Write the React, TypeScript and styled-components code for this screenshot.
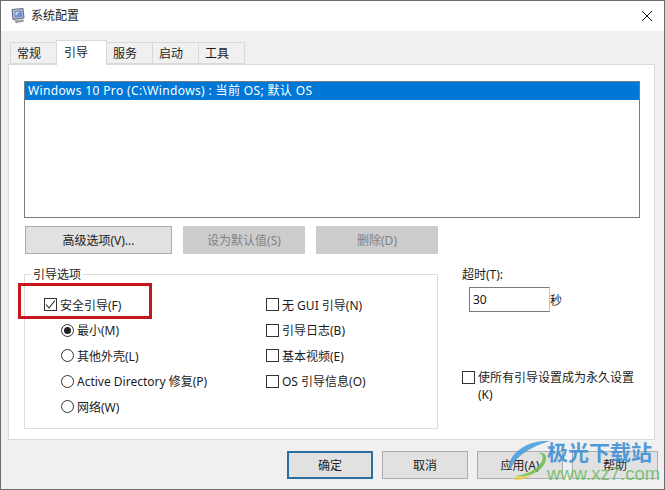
import styled, { createGlobalStyle } from "styled-components";

const GlobalStyle = createGlobalStyle`
  html, body {
    margin: 0;
    padding: 0;
    background: #f0f0f0;
  }
  body {
    font-family: "Noto Sans", "Noto Sans CJK SC", sans-serif;
    font-size: 12px;
    color: #1c1c1c;
  }
`;

const bootOptions = [
  { label: "最小(M)", checked: true },
  { label: "其他外壳(L)", checked: false },
  { label: "Active Directory 修复(P)", checked: false },
  { label: "网络(W)", checked: false },
];

const extraOptions = ["无 GUI 引导(N)", "引导日志(B)", "基本视频(E)", "OS 引导信息(O)"];

const tabs = ["常规", "引导", "服务", "启动", "工具"];

function AppIcon() {
  return (
    <svg width="16" height="16" viewBox="0 0 16 16">
      <path d="M2 1.5 L13 0.5 L14 10 L3 11.5 Z" fill="#b9c2d2" stroke="#5c6472" strokeWidth="1" />
      <path d="M4 3 L11.8 2.4 L12.4 8.8 L4.6 9.8 Z" fill="#6f8fd0" />
      <path d="M5.2 4.2 L9.6 3.8 L5.8 8 Z" fill="#c4d4f2" />
      <path d="M4 12.5 L13 11.5 L14.5 13.5 L6 15.2 Z" fill="#9a9ea6" />
    </svg>
  );
}

function CloseIcon() {
  return (
    <svg width="10" height="10" viewBox="0 0 10 10">
      <path d="M0 0 L10 10 M10 0 L0 10" stroke="#111" strokeWidth="1" fill="none" />
    </svg>
  );
}

function CheckMark() {
  return (
    <svg width="11" height="11" viewBox="0 0 11 11">
      <path d="M1 5.5 L4 9 L10 1.5" stroke="#222" strokeWidth="1.1" fill="none" />
    </svg>
  );
}

function WatermarkLogo() {
  return (
    <svg width="44" height="42" viewBox="0 0 44 42">
      <path d="M42 2 C24 1 6 9 1 25 C1 28 2 30 3 31 C6 18 22 8 42 2 Z" fill="#4a9fdc" />
      <path d="M29 15 C36 13 36 20 32 25 C27 32 17 36 7 37 C18 39 32 34 37 24 C40 17 37 12 29 15 Z" fill="#72c04f" />
      <path d="M8 37 C14 38 20 37 25 35 C20 39 14 41 6 41 Z" fill="#e9cf55" />
    </svg>
  );
}

export default function App() {
  return (
    <Window>
      <GlobalStyle />
      <TitleBar>
        <TitleIcon>
          <AppIcon />
        </TitleIcon>
        <TitleText>系统配置</TitleText>
        <CloseBox>
          <CloseIcon />
        </CloseBox>
      </TitleBar>

      <TabStrip>
        {tabs.map((t) => (
          <Tab key={t} $active={t === "引导"}>
            {t}
          </Tab>
        ))}
      </TabStrip>

      <Panel>
        <ListBox>
          <ListRow>Windows 10 Pro (C:\Windows) : 当前 OS; 默认 OS</ListRow>
        </ListBox>

        <ActionRow>
          <ActionButton $width={147}>高级选项(V)...</ActionButton>
          <ActionButton $width={122} $disabled>
            设为默认值(S)
          </ActionButton>
          <ActionButton $width={122} $disabled>
            删除(D)
          </ActionButton>
        </ActionRow>

        <LowerArea>
          <GroupBox>
            <GroupLegend>引导选项</GroupLegend>
            <GroupColumns>
              <OptionColumn>
                <OptionRow>
                  <CheckBox $checked>
                    <CheckMark />
                  </CheckBox>
                  安全引导(F)
                </OptionRow>
                {bootOptions.map((o) => (
                  <RadioRow key={o.label}>
                    <Radio $checked={o.checked} />
                    {o.label}
                  </RadioRow>
                ))}
              </OptionColumn>
              <OptionColumn>
                {extraOptions.map((o) => (
                  <OptionRow key={o}>
                    <CheckBox />
                    {o}
                  </OptionRow>
                ))}
              </OptionColumn>
            </GroupColumns>
            <RedMark />
          </GroupBox>

          <SideColumn>
            <SideLabel>超时(T):</SideLabel>
            <TimeoutRow>
              <TimeoutInput>30</TimeoutInput>
              <span>秒</span>
            </TimeoutRow>
            <PermanentRow>
              <CheckBox />
              <PermanentText>
                使所有引导设置成为永久设置
                <br />
                (K)
              </PermanentText>
            </PermanentRow>
          </SideColumn>
        </LowerArea>
      </Panel>

      <Footer>
        <FooterButton $primary>确定</FooterButton>
        <FooterButton>取消</FooterButton>
        <FooterButton>应用(A)</FooterButton>
        <FooterButton>帮助</FooterButton>
      </Footer>

      <Watermark>
        <WatermarkLogo />
        <WatermarkText>
          <WatermarkName>极光下载站</WatermarkName>
          <WatermarkUrl>www.xz7.com</WatermarkUrl>
        </WatermarkText>
      </Watermark>
    </Window>
  );
}

const Window = styled.div`
  position: relative;
  box-sizing: border-box;
  width: 665px;
  height: 490px;
  border: 1px solid #6d6d6d;
  background: #f0f0f0;
  overflow: hidden;
`;

const TitleBar = styled.div`
  display: flex;
  align-items: center;
  height: 30px;
  background: #fff;
  padding-left: 9px;
`;

const TitleIcon = styled.div`
  display: flex;
  width: 21px;
`;

const TitleText = styled.div`
  flex: 1;
  margin-top: -2px;
`;

const CloseBox = styled.div`
  display: flex;
  margin-right: 12px;
`;

const TabStrip = styled.div`
  display: flex;
  align-items: flex-end;
  height: 33px;
  padding-left: 9px;
  position: relative;
  z-index: 1;
`;

const Tab = styled.div<{ $active?: boolean }>`
  box-sizing: border-box;
  display: flex;
  align-items: center;
  width: ${(p) => (p.$active ? 51 : 47)}px;
  height: ${(p) => (p.$active ? 25 : 22)}px;
  margin-bottom: ${(p) => (p.$active ? -1 : 0)}px;
  margin-right: -1px;
  padding-left: ${(p) => (p.$active ? 7 : 6)}px;
  padding-bottom: ${(p) => (p.$active ? 2 : 0)}px;
  background: ${(p) => (p.$active ? "#fff" : "#f0f0f0")};
  border: 1px solid #d9d9d9;
  border-bottom: ${(p) => (p.$active ? "none" : "1px solid #d9d9d9")};
`;

const Panel = styled.div`
  box-sizing: border-box;
  width: 647px;
  height: 376px;
  margin-left: 7px;
  padding: 16px 15px 0;
  background: #fff;
  border: 1px solid #d9d9d9;
`;

const ListBox = styled.div`
  box-sizing: border-box;
  width: 616px;
  height: 137px;
  border: 1px solid #7a7a7a;
`;

const ListRow = styled.div`
  height: 18px;
  line-height: 18px;
  padding-left: 3px;
  letter-spacing: 0.36px;
  background: #0078d7;
  color: #fff;
`;

const ActionRow = styled.div`
  display: flex;
  gap: 11px;
  margin-top: 8px;
  padding-left: 1px;
`;

const ActionButton = styled.div<{ $width: number; $disabled?: boolean }>`
  box-sizing: border-box;
  display: flex;
  align-items: center;
  justify-content: center;
  width: ${(p) => p.$width}px;
  height: 28px;
  background: ${(p) => (p.$disabled ? "#cccccc" : "#e1e1e1")};
  border: 1px solid ${(p) => (p.$disabled ? "#cccccc" : "#adadad")};
  color: ${(p) => (p.$disabled ? "#838383" : "#1c1c1c")};
`;

const LowerArea = styled.div`
  display: flex;
  margin-top: 12px;
`;

const GroupBox = styled.fieldset`
  position: relative;
  box-sizing: border-box;
  width: 414px;
  height: 163px;
  margin: 0;
  padding: 0;
  border: 1px solid #dcdcdc;
`;

const GroupLegend = styled.legend`
  margin-left: 6px;
  padding: 0 2px;
  line-height: 17px;
`;

const GroupColumns = styled.div`
  display: grid;
  grid-template-columns: 222px 1fr;
  padding: 9px 0 0 19px;
`;

const OptionColumn = styled.div`
  display: flex;
  flex-direction: column;
`;

const OptionRow = styled.div`
  display: flex;
  align-items: center;
  height: 25.5px;
  gap: 3px;
`;

const RadioRow = styled(OptionRow)`
  padding-left: 17px;
`;

const CheckBox = styled.span<{ $checked?: boolean }>`
  box-sizing: border-box;
  display: flex;
  align-items: center;
  justify-content: center;
  flex: none;
  width: 13px;
  height: 13px;
  background: #fff;
  border: 1px solid #333;
`;

const Radio = styled.span<{ $checked?: boolean }>`
  box-sizing: border-box;
  display: flex;
  align-items: center;
  justify-content: center;
  flex: none;
  width: 13px;
  height: 13px;
  border-radius: 50%;
  border: 1px solid #333;
  &::after {
    content: "";
    display: ${(p) => (p.$checked ? "block" : "none")};
    width: 7px;
    height: 7px;
    border-radius: 50%;
    background: #222;
  }
`;

const RedMark = styled.div`
  position: absolute;
  left: -7px;
  top: 0;
  box-sizing: border-box;
  width: 134px;
  height: 36px;
  border: 3px solid #c5161c;
`;

const SideColumn = styled.div`
  display: flex;
  flex-direction: column;
  flex: none;
  margin-left: 24px;
  width: 176px;
`;

const SideLabel = styled.div`
  line-height: 17px;
  margin-bottom: 4px;
`;

const TimeoutRow = styled.div`
  display: flex;
  align-items: center;
  padding-left: 7px;
`;

const TimeoutInput = styled.div`
  box-sizing: border-box;
  width: 81px;
  height: 25px;
  line-height: 23px;
  padding-left: 3px;
  border: 1px solid #7a7a7a;
  border-right-color: #c4c4c4;
  color: #111;
`;

const PermanentRow = styled.div`
  display: flex;
  align-items: flex-start;
  gap: 3px;
  margin-top: 59px;
`;

const PermanentText = styled.div`
  flex: none;
  width: 160px;
  line-height: 17px;
  margin-top: -2px;
`;

const Footer = styled.div`
  display: flex;
  gap: 9px;
  margin-top: 11px;
  padding-left: 286px;
`;

const FooterButton = styled.div<{ $primary?: boolean }>`
  box-sizing: border-box;
  display: flex;
  align-items: center;
  justify-content: center;
  width: 86px;
  height: 28px;
  background: #e1e1e1;
  border: ${(p) => (p.$primary ? "2px solid #2a6f9e" : "1px solid #adadad")};
`;

const Watermark = styled.div`
  position: absolute;
  left: 507px;
  top: 438px;
  display: flex;
  opacity: 0.88;
  pointer-events: none;
`;

const WatermarkText = styled.div`
  display: flex;
  flex-direction: column;
  margin-left: -5px;
`;

const WatermarkName = styled.div`
  font-family: "Noto Sans CJK SC", sans-serif;
  font-weight: 700;
  font-size: 21px;
  line-height: 24px;
  color: #3c8fd6;
`;

const WatermarkUrl = styled.div`
  font-family: "Liberation Sans", sans-serif;
  font-size: 18.5px;
  line-height: 17px;
  margin-top: 2px;
  color: #70bd6c;
`;
